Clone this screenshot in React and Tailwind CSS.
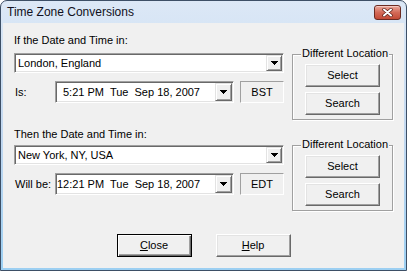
import React from "react";

function Arrow() {
  return (
    <svg width="7" height="4" viewBox="0 0 7 4" shapeRendering="crispEdges">
      <path d="M0 0h7v1H0zM1 1h5v1H1zM2 2h3v1H2zM3 3h1v1H3z" fill="#000" />
    </svg>
  );
}

function DropButton({ className }) {
  return (
    <div
      className={
        "flex items-center justify-center bg-[#f0f0f0] border border-t-[#e3e3e3] border-l-[#e3e3e3] border-b-[#696969] border-r-[#696969] shadow-[inset_1px_1px_#fff,inset_-1px_-1px_#a0a0a0] " +
        className
      }
    >
      <Arrow />
    </div>
  );
}

function Combo({ value }) {
  return (
    <div className="h-[20px] flex items-center bg-white p-[1px] border border-t-[#a0a0a0] border-l-[#a0a0a0] border-b-white border-r-white shadow-[inset_1px_1px_#696969,inset_-1px_-1px_#e3e3e3]">
      <span className="flex-1 pl-[2px] leading-[13px]">{value}</span>
      <DropButton className="w-[16px] h-[16px]" />
    </div>
  );
}

function TimeRow({ label, time, zone, pad }) {
  return (
    <div className="flex items-center h-[22px]">
      <span className="w-[41px] pl-[1px] leading-[13px]">{label}</span>
      <div className="w-[179px] h-[22px] flex items-center bg-white p-[1px] border border-t-[#a0a0a0] border-l-[#a0a0a0] border-b-white border-r-white shadow-[inset_1px_1px_#696969,inset_-1px_-1px_#e3e3e3]">
        <span className="flex-1 whitespace-pre leading-[13px]">
          {pad && <span className="inline-block w-[6px]" />}
          {time}
        </span>
        <DropButton className="w-[17px] h-[18px]" />
      </div>
      <div className="ml-[6px] w-[44px] h-[22px] flex items-center justify-center border border-t-[#a0a0a0] border-l-[#a0a0a0] border-b-white border-r-white">
        {zone}
      </div>
    </div>
  );
}

function Button({ children, isDefault }) {
  return (
    <button
      className={
        isDefault
          ? "w-[75px] h-[23px] flex items-center justify-center bg-[#f0f0f0] border border-[#000] shadow-[inset_1px_1px_#fff,inset_-1px_-1px_#696969,inset_-2px_-2px_#a0a0a0]"
          : "w-[75px] h-[23px] flex items-center justify-center bg-[#f0f0f0] border border-t-white border-l-white border-b-[#696969] border-r-[#696969] shadow-[inset_-1px_-1px_#a0a0a0,inset_1px_1px_#e3e3e3]"
      }
    >
      {children}
    </button>
  );
}

function LocationGroup({ className }) {
  return (
    <div
      className={
        "relative w-[101px] h-[66px] border border-[#a0a0a0] shadow-[inset_1px_1px_#fff,1px_1px_#fff] flex flex-col items-center pt-[9px] gap-[5px] " +
        className
      }
    >
      <span className="absolute -top-[8px] left-[8px] px-[1px] bg-[#f0f0f0] leading-[13px]">
        Different Location
      </span>
      <Button>Select</Button>
      <Button>Search</Button>
    </div>
  );
}

export default function App() {
  return (
    <div className="w-[407px] h-[271px] flex flex-col rounded-t-[7px] border border-[#3d4f66] bg-gradient-to-b from-[#dce8f6] via-[#c2d8f0] to-[#9ccff2] overflow-hidden text-[11px] text-black font-['Liberation_Sans',Arial,sans-serif]">
      {/* Title bar */}
      <div className="h-[22px] flex items-center pl-[6px] pr-[5px]">
        <span className="text-[12px] leading-[15px] text-[#101020]">Time Zone Conversions</span>
        <div className="ml-auto w-[27px] h-[15px] rounded-[3px] border border-[#6b2b22] bg-gradient-to-b from-[#e9a89c] via-[#d36a58] to-[#c34a36] shadow-[inset_0_1px_#f3c8c0] flex items-center justify-center">
          <svg width="11" height="9" viewBox="0 0 11 9">
            <path d="M2 1.5l7 6M9 1.5l-7 6" stroke="#5a1e16" strokeWidth="3.4" strokeLinecap="round" />
            <path d="M2 1.5l7 6M9 1.5l-7 6" stroke="#fff" strokeWidth="2" strokeLinecap="round" />
          </svg>
        </div>
      </div>

      {/* Client area */}
      <div className="flex-1 mx-[2px] mb-[2px] bg-[#f0f0f0] px-[11px] flex flex-col">
        {/* From */}
        <div className="flex items-start gap-[8px]">
          <div className="w-[270px] flex flex-col">
            <span className="mt-[11px] leading-[13px]">If the Date and Time in:</span>
            <div className="mt-[6px]">
              <Combo value="London, England" />
            </div>
            <div className="mt-[8px]">
              <TimeRow label="Is:" time="5:21 PM  Tue  Sep 18, 2007" zone="BST" pad />
            </div>
          </div>
          <LocationGroup className="mt-[31px]" />
        </div>

        {/* To */}
        <div className="flex items-start gap-[8px]">
          <div className="w-[270px] flex flex-col">
            <span className="mt-[8px] leading-[13px]">Then the Date and Time in:</span>
            <div className="mt-[4px]">
              <Combo value="New York, NY, USA" />
            </div>
            <div className="mt-[8px]">
              <TimeRow label="Will be:" time="12:21 PM  Tue  Sep 18, 2007" zone="EDT" />
            </div>
          </div>
          <LocationGroup className="mt-[25px]" />
        </div>

        {/* Bottom buttons */}
        <div className="mt-[23px] flex justify-center gap-[24px]">
          <Button isDefault>
            <span className="underline underline-offset-[1px]">C</span>lose
          </Button>
          <Button>
            <span className="underline underline-offset-[1px]">H</span>elp
          </Button>
        </div>
      </div>
    </div>
  );
}
